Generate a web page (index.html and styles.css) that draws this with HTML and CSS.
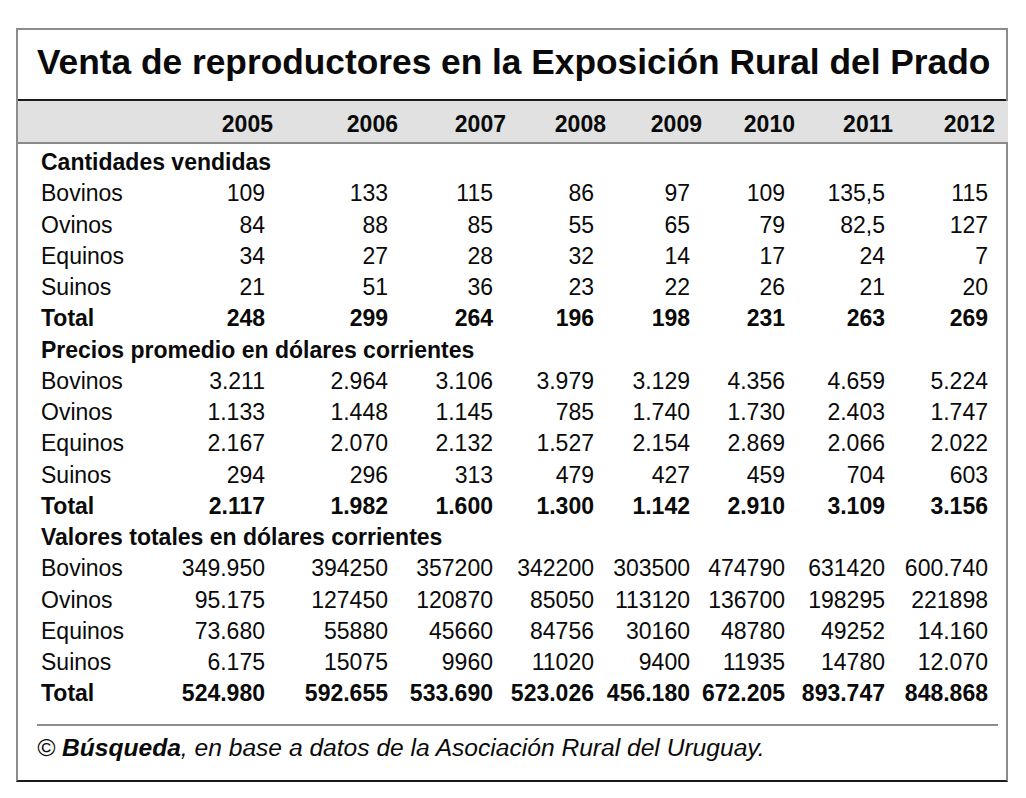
FILE: index.html
```html
<!DOCTYPE html>
<html lang="es">
<head>
<meta charset="utf-8">
<title>Venta de reproductores</title>
<link rel="stylesheet" href="styles.css">
</head>
<body>
<div class="box">
  <h1 class="title">Venta de reproductores en la Exposición Rural del Prado</h1>
  <div class="band row">
    <span></span><span>2005</span><span>2006</span><span>2007</span><span>2008</span><span>2009</span><span>2010</span><span>2011</span><span>2012</span>
  </div>
  <div class="body">
    <div class="section">Cantidades vendidas</div>
    <div class="row data"><span>Bovinos</span><span>109</span><span>133</span><span>115</span><span>86</span><span>97</span><span>109</span><span>135,5</span><span>115</span></div>
    <div class="row data"><span>Ovinos</span><span>84</span><span>88</span><span>85</span><span>55</span><span>65</span><span>79</span><span>82,5</span><span>127</span></div>
    <div class="row data"><span>Equinos</span><span>34</span><span>27</span><span>28</span><span>32</span><span>14</span><span>17</span><span>24</span><span>7</span></div>
    <div class="row data"><span>Suinos</span><span>21</span><span>51</span><span>36</span><span>23</span><span>22</span><span>26</span><span>21</span><span>20</span></div>
    <div class="row data total"><span>Total</span><span>248</span><span>299</span><span>264</span><span>196</span><span>198</span><span>231</span><span>263</span><span>269</span></div>
    <div class="section">Precios promedio en dólares corrientes</div>
    <div class="row data"><span>Bovinos</span><span>3.211</span><span>2.964</span><span>3.106</span><span>3.979</span><span>3.129</span><span>4.356</span><span>4.659</span><span>5.224</span></div>
    <div class="row data"><span>Ovinos</span><span>1.133</span><span>1.448</span><span>1.145</span><span>785</span><span>1.740</span><span>1.730</span><span>2.403</span><span>1.747</span></div>
    <div class="row data"><span>Equinos</span><span>2.167</span><span>2.070</span><span>2.132</span><span>1.527</span><span>2.154</span><span>2.869</span><span>2.066</span><span>2.022</span></div>
    <div class="row data"><span>Suinos</span><span>294</span><span>296</span><span>313</span><span>479</span><span>427</span><span>459</span><span>704</span><span>603</span></div>
    <div class="row data total"><span>Total</span><span>2.117</span><span>1.982</span><span>1.600</span><span>1.300</span><span>1.142</span><span>2.910</span><span>3.109</span><span>3.156</span></div>
    <div class="section">Valores totales en dólares corrientes</div>
    <div class="row data"><span>Bovinos</span><span>349.950</span><span>394250</span><span>357200</span><span>342200</span><span>303500</span><span>474790</span><span>631420</span><span>600.740</span></div>
    <div class="row data"><span>Ovinos</span><span>95.175</span><span>127450</span><span>120870</span><span>85050</span><span>113120</span><span>136700</span><span>198295</span><span>221898</span></div>
    <div class="row data"><span>Equinos</span><span>73.680</span><span>55880</span><span>45660</span><span>84756</span><span>30160</span><span>48780</span><span>49252</span><span>14.160</span></div>
    <div class="row data"><span>Suinos</span><span>6.175</span><span>15075</span><span>9960</span><span>11020</span><span>9400</span><span>11935</span><span>14780</span><span>12.070</span></div>
    <div class="row data total"><span>Total</span><span>524.980</span><span>592.655</span><span>533.690</span><span>523.026</span><span>456.180</span><span>672.205</span><span>893.747</span><span>848.868</span></div>
  </div>
  <div class="footer">© <b>Búsqueda</b>, en base a datos de la Asociación Rural del Uruguay.</div>
</div>
</body>
</html>
```
FILE: styles.css
```css
html, body {
  margin: 0;
  padding: 0;
  background: #fff;
}
body {
  font-family: "Liberation Sans", Arial, Helvetica, sans-serif;
  color: #0a0a0a;
}
.box {
  margin: 28px 0 0 16px;
  width: 988px;
  height: 750px;
  border-top: 2px solid #8c8c8c;
  border-left: 2px solid #8c8c8c;
  border-right: 2px solid #8c8c8c;
  border-bottom: 2px solid #1a1a1a;
  display: flex;
  flex-direction: column;
}
.title {
  margin: 0;
  height: 69px;
  border-bottom: 2px solid #1a1a1a;
  font-size: 35.3px;
  font-weight: bold;
  line-height: 64px;
  padding-left: 19px;
  white-space: nowrap;
}
.row {
  display: grid;
  grid-template-columns: 120px 112px 125px 108px 100px 96px 93px 98px 102px;
  padding-left: 23px;
  font-size: 23px;
  white-space: nowrap;
}
.row span:not(:first-child) {
  text-align: right;
}
.band {
  background: #e1e1e1;
  height: 41px;
  line-height: 46px;
  font-weight: bold;
  border-bottom: 2px solid #8a8a8a;
  margin-right: -2px;
}
.band span:nth-child(2) { padding-right: 0; }
.body {
  padding-top: 3px;
}
.section {
  padding-left: 23px;
  font-size: 23px;
  font-weight: bold;
  line-height: 31.25px;
  height: 31.25px;
}
.data {
  line-height: 31.25px;
  height: 31.25px;
}
.data span:nth-child(2) { padding-right: 8px; }
.data span:nth-child(3) { padding-right: 10px; }
.data span:nth-child(4) { padding-right: 13px; }
.data span:nth-child(5) { padding-right: 12px; }
.data span:nth-child(6) { padding-right: 12px; }
.data span:nth-child(7) { padding-right: 10px; }
.data span:nth-child(8) { padding-right: 8px; }
.data span:nth-child(9) { padding-right: 7px; }
.total {
  font-weight: bold;
}
.footer {
  margin: 14px 8px 0 19px;
  border-top: 2px solid #8c8c8c;
  padding-top: 8px;
  font-size: 24.6px;
  font-style: italic;
  white-space: nowrap;
}
.footer b {
  font-weight: bold;
}
```
